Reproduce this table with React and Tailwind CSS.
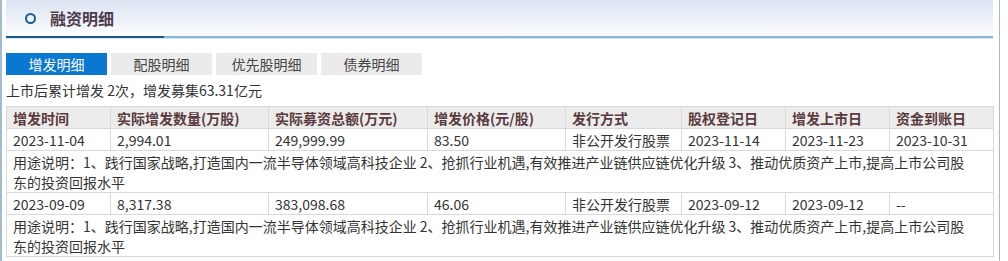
import React from "react";

const font = { fontFamily: '"Noto Sans CJK SC", "Noto Sans", sans-serif' };

const tabs = ["增发明细", "配股明细", "优先股明细", "债券明细"];

const columns = [
  { label: "增发时间", w: "w-[104px]" },
  { label: "实际增发数量(万股)", w: "w-[158px]" },
  { label: "实际募资总额(万元)", w: "w-[159px]" },
  { label: "增发价格(元/股)", w: "w-[138px]" },
  { label: "发行方式", w: "w-[116px]" },
  { label: "股权登记日", w: "w-[104px]" },
  { label: "增发上市日", w: "w-[104px]" },
  { label: "资金到账日", w: "w-[104px]" },
];

const purpose =
  "用途说明：1、践行国家战略,打造国内一流半导体领域高科技企业 2、抢抓行业机遇,有效推进产业链供应链优化升级 3、推动优质资产上市,提高上市公司股东的投资回报水平";

const rows = [
  {
    cells: ["2023-11-04", "2,994.01", "249,999.99", "83.50", "非公开发行股票", "2023-11-14", "2023-11-23", "2023-10-31"],
    note: purpose,
  },
  {
    cells: ["2023-09-09", "8,317.38", "383,098.68", "46.06", "非公开发行股票", "2023-09-12", "2023-09-12", "--"],
    note: purpose,
  },
];

export default function App() {
  return (
    <div className="w-[1008px] h-[261px] bg-white overflow-hidden" style={font}>
      <div className="w-[1000px] h-[261px] border-l-2 border-r border-[#a3bbcf] pl-[4px] pr-[6px]">
        {/* title bar */}
        <div className="h-[36px] bg-gradient-to-b from-[#dae4f1] to-[#fcfdfe] flex items-center pl-[19px]">
          <span className="w-[11px] h-[11px] rounded-full border-2 border-[#1f5d8c]" />
          <span className="ml-[14px] text-[16px] font-bold text-[#4e3b4c] leading-none">融资明细</span>
        </div>
        <div className="flex h-[2px]">
          <div className="w-[158px] bg-[#1b5a86]" />
          <div className="flex-1 bg-[#86b7d3]" />
        </div>
        <div className="h-[1px] bg-[#d6e6f0]" />

        {/* tabs */}
        <div className="flex gap-[4px] mt-[14px]">
          {tabs.map((t, i) => (
            <div
              key={t}
              className={
                i === 0
                  ? "w-[101px] h-[22px] flex items-center justify-center text-[14px] bg-[#0a78d1] text-white"
                  : "w-[101px] h-[22px] flex items-center justify-center text-[14px] bg-[#ebebeb] text-[#444]"
              }
            >
              {t}
            </div>
          ))}
        </div>

        <div className="h-[31px] flex items-center text-[14px] text-[#333]">
          上市后累计增发 2次，增发募集63.31亿元
        </div>

        {/* table */}
        <table className="table-fixed border-collapse w-[987px] text-[14px] text-[#333]">
          <colgroup>
            {columns.map((c) => (
              <col key={c.label} className={c.w} />
            ))}
          </colgroup>
          <thead>
            <tr className="h-[22px] bg-[#ececec]">
              {columns.map((c) => (
                <th
                  key={c.label}
                  className="border border-[#d9d9d9] px-[6px] py-0 text-left font-bold text-[#5a3a3c] leading-[20px] whitespace-nowrap"
                >
                  {c.label}
                </th>
              ))}
            </tr>
          </thead>
          <tbody>
            {rows.map((r, i) => (
              <React.Fragment key={i}>
                <tr className="h-[22px]">
                  {r.cells.map((v, j) => (
                    <td key={j} className="border border-[#d9d9d9] px-[6px] py-0 leading-[20px] whitespace-nowrap">
                      {v}
                    </td>
                  ))}
                </tr>
                <tr className="h-[42px]">
                  <td colSpan={8} className="border border-[#d9d9d9] pl-[6px] pr-[16px] py-0 leading-[20px] align-middle">
                    {r.note}
                  </td>
                </tr>
              </React.Fragment>
            ))}
          </tbody>
        </table>
      </div>
    </div>
  );
}
